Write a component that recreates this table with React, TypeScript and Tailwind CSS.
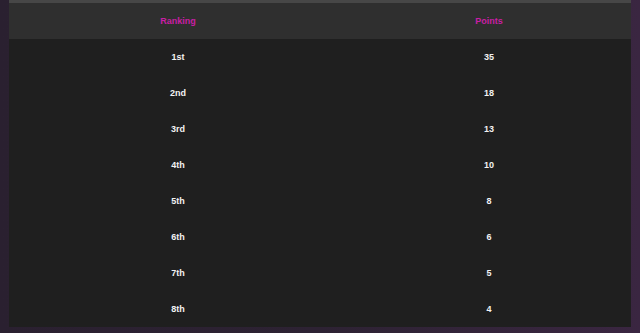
const rows = [
  { rank: '1st', points: 35 },
  { rank: '2nd', points: 18 },
  { rank: '3rd', points: 13 },
  { rank: '4th', points: 10 },
  { rank: '5th', points: 8 },
  { rank: '6th', points: 6 },
  { rank: '7th', points: 5 },
  { rank: '8th', points: 4 },
];

export default function App() {
  return (
    <div
      className="w-[640px] h-[333px] overflow-hidden bg-gradient-to-r from-[#2a2030] via-[#2d2233] to-[#3a2641] px-[9px]"
      style={{ fontFamily: '"Liberation Sans", Arial, sans-serif' }}
    >
      <div className="w-[622px] border-t-[3px] border-[#474747]">
        {/* Header */}
        <div className="flex h-[36px] items-center pt-[2px] bg-[#2f2f2f] text-[9px] font-bold text-[#c81ea4]">
          <div className="w-[338px] text-center">Ranking</div>
          <div className="flex-1 text-center">Points</div>
        </div>

        {/* Body */}
        <div className="bg-[#1f1f1f]">
          {rows.map((r) => (
            <div key={r.rank} className="flex h-[36px] items-center pt-[2px] text-[9px] font-semibold text-[#f2f2f2]">
              <div className="w-[338px] text-center">{r.rank}</div>
              <div className="flex-1 text-center">{r.points}</div>
            </div>
          ))}
        </div>
      </div>
    </div>
  );
}
